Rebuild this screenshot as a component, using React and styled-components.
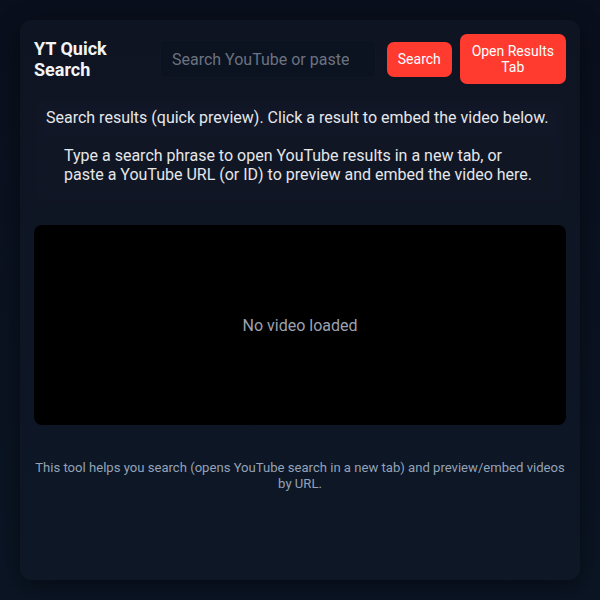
import React, { useState } from "react";
import styled, { createGlobalStyle } from "styled-components";

const GlobalStyle = createGlobalStyle`
  html, body {
    margin: 0;
    padding: 0;
  }
  body {
    background: linear-gradient(180deg, #0a0f1d 0%, #0b1524 100%);
    min-height: 100vh;
    font-family: Roboto, "Liberation Sans", sans-serif;
    color: #e5e7eb;
  }
`;

const App = () => {
  const [query, setQuery] = useState("");

  return (
    <>
      <GlobalStyle />
      <Page>
        <Card>
          <Header>
            <Title>YT Quick Search</Title>
            <SearchInput
              value={query}
              onChange={(e) => setQuery(e.target.value)}
              placeholder="Search YouTube or paste URL"
            />
            <SearchButton>Search</SearchButton>
            <OpenButton>Open Results Tab</OpenButton>
          </Header>

          <Results>
            <ResultsTitle>
              Search results (quick preview). Click a result to embed the video
              below.
            </ResultsTitle>
            <Empty>
              Type a search phrase to open YouTube results in a new tab, or
              paste a YouTube URL (or ID) to preview and embed the video here.
            </Empty>
          </Results>

          <Player>No video loaded</Player>

          <Footer>
            This tool helps you search (opens YouTube search in a new tab) and
            preview/embed videos by URL.
          </Footer>
        </Card>
      </Page>
    </>
  );
};

const Page = styled.div`
  padding: 20px;
  height: 600px;
  box-sizing: border-box;
`;

const Card = styled.div`
  height: 100%;
  box-sizing: border-box;
  padding: 14px;
  border-radius: 12px;
  background: linear-gradient(180deg, #0f1422 0%, #0d1726 100%);
  box-shadow: 0 6px 24px rgba(0, 0, 0, 0.45);
`;

const Header = styled.div`
  display: flex;
  align-items: center;
  gap: 8px;
  height: 50px;
`;

const Title = styled.h1`
  margin: 0;
  width: 118px;
  flex-shrink: 0;
  font-size: 18px;
  line-height: 21px;
  font-weight: 700;
  color: #f3f4f6;
`;

const SearchInput = styled.input`
  width: 216px;
  height: 38px;
  margin-right: 3px;
  box-sizing: border-box;
  padding: 0 26px 0 11px;
  border: 1px solid #0f1726;
  border-radius: 6px;
  background: #0b1220;
  color: #e5e7eb;
  font-family: Roboto, "Liberation Sans", sans-serif;
  font-size: 16px;
  outline: none;

  &::placeholder {
    color: #6b7280;
  }
`;

const Button = styled.button`
  border: none;
  border-radius: 7px;
  background: #ff3b30;
  color: #ffffff;
  font-family: Roboto, "Liberation Sans", sans-serif;
  font-size: 14px;
  line-height: 16px;
  cursor: pointer;
`;

const SearchButton = styled(Button)`
  width: 65px;
  height: 35px;
  padding: 0;
`;

const OpenButton = styled(Button)`
  width: 107px;
  height: 50px;
  padding: 0 10px;
`;

const Results = styled.div`
  margin-top: 14px;
  padding: 10px 12px;
  border-radius: 8px;
  background: #111726;
  box-shadow: inset 0 0 12px rgba(0, 0, 0, 0.15);
`;

const ResultsTitle = styled.div`
  font-size: 16px;
  line-height: 20px;
  color: #e5e7eb;
`;

const Empty = styled.div`
  margin-top: 8px;
  padding: 10px 18px;
  border-radius: 6px;
  background: #101624;
  font-size: 16px;
  line-height: 19px;
  color: #e5e7eb;
`;

const Player = styled.div`
  margin-top: 21px;
  height: 200px;
  display: flex;
  align-items: center;
  justify-content: center;
  border-radius: 8px;
  background: #000000;
  color: #9ca3af;
  font-size: 16px;
`;

const Footer = styled.p`
  margin: 35px 0 0;
  text-align: center;
  font-size: 13.1px;
  line-height: 16px;
  color: #94a3b8;
`;

export default App;
